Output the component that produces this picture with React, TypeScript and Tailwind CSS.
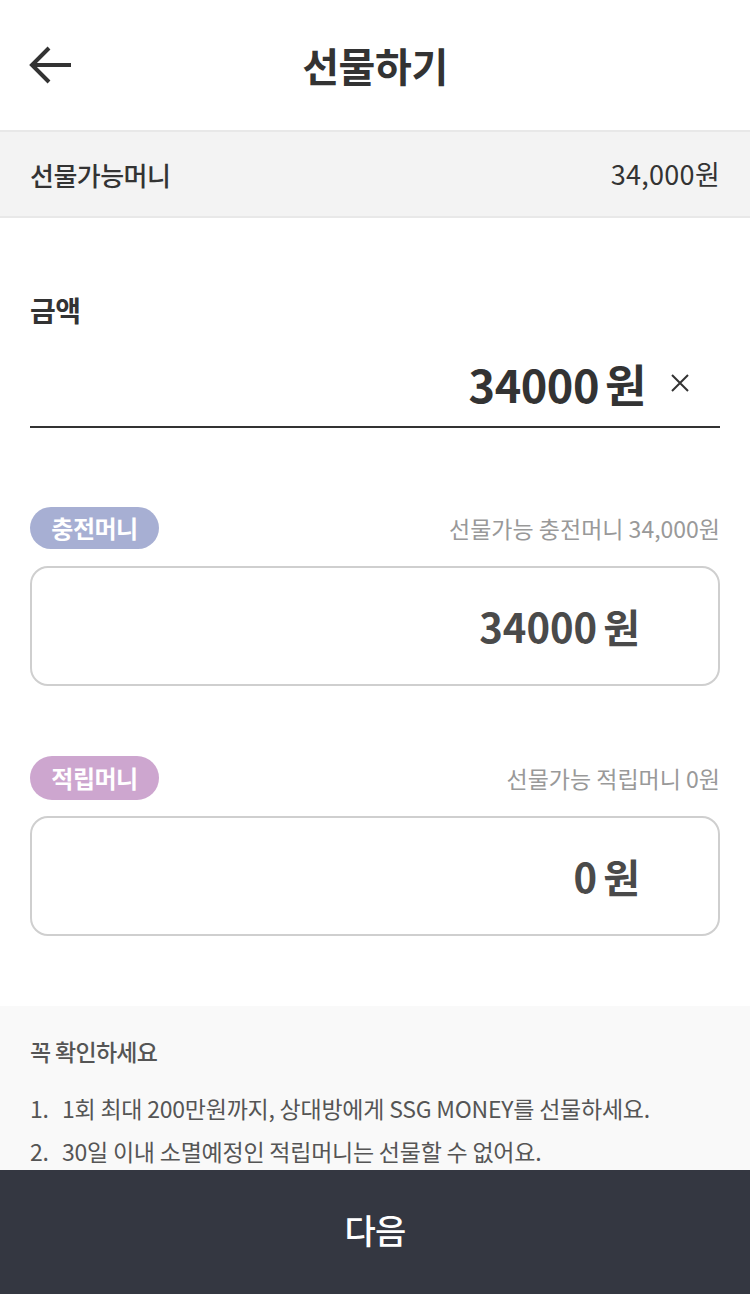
import React from "react";

const font = { fontFamily: '"Noto Sans CJK KR", "Noto Sans", sans-serif' };

export default function App() {
  return (
    <div
      className="w-[750px] h-[1294px] flex flex-col bg-white overflow-hidden text-[#333]"
      style={font}
    >
      {/* Header */}
      <div className="h-[130px] flex items-center relative shrink-0">
        <div className="absolute left-[28px] top-[45px]">
          <svg width="46" height="40" viewBox="0 0 46 40" fill="none">
            <path d="M43 20H5" stroke="#333" strokeWidth="4" />
            <path d="M21 3L4 20L21 37" stroke="#333" strokeWidth="4" fill="none" />
          </svg>
        </div>
        <div className="w-full text-center text-[40px] font-bold tracking-[-0.01em] leading-none">
          선물하기
        </div>
      </div>

      {/* Balance bar */}
      <div className="h-[88px] shrink-0 bg-[#f3f3f3] border-y-2 border-[#e8e8e8] flex items-center justify-between px-[30px]">
        <span className="text-[26px] font-medium tracking-[-0.02em]">선물가능머니</span>
        <span className="text-[27px] tracking-[0.01em]">34,000원</span>
      </div>

      <div className="flex-1 flex flex-col overflow-hidden">
        {/* Amount */}
        <div className="px-[30px] pt-[78px]">
          <div className="text-[28px] font-bold tracking-[-0.02em] leading-none">금액</div>
          <div className="mt-[26px] h-[78px] pb-[10px] flex items-center justify-end border-b-2 border-[#333]">
            <span className="text-[45px] font-bold tracking-[-0.01em] leading-none">
              34000<span className="ml-[6px]">원</span>
            </span>
            <svg className="ml-[24px] mr-[30px]" width="20" height="20" viewBox="0 0 20 20">
              <path d="M2 2L18 18M18 2L2 18" stroke="#333" strokeWidth="2" />
            </svg>
          </div>
        </div>

        {/* 충전머니 */}
        <div className="px-[30px] mt-[79px]">
          <div className="flex items-center justify-between h-[42px]">
            <span className="h-[42px] w-[129px] rounded-full bg-[#a7afd3] text-white text-[24px] font-bold tracking-[-0.02em] flex items-center justify-center">
              충전머니
            </span>
            <span className="text-[23px] text-[#999] tracking-[0em]">선물가능 충전머니 34,000원</span>
          </div>
          <div className="mt-[17px] h-[120px] rounded-[18px] border-2 border-[#cfcfcf] flex items-center justify-end pr-[78px]">
            <span className="text-[40px] font-bold text-[#4a4a4a] tracking-[0em] leading-none">
              34000<span className="ml-[6px]">원</span>
            </span>
          </div>
        </div>

        {/* 적립머니 */}
        <div className="px-[30px] mt-[70px]">
          <div className="flex items-center justify-between h-[44px]">
            <span className="h-[44px] w-[129px] rounded-full bg-[#cda6cf] text-white text-[24px] font-bold tracking-[-0.02em] flex items-center justify-center">
              적립머니
            </span>
            <span className="text-[23px] text-[#999] tracking-[0em]">선물가능 적립머니 0원</span>
          </div>
          <div className="mt-[16px] h-[120px] rounded-[18px] border-2 border-[#cfcfcf] flex items-center justify-end pr-[78px]">
            <span className="text-[40px] font-bold text-[#4a4a4a] tracking-[0em] leading-none">
              0<span className="ml-[6px]">원</span>
            </span>
          </div>
        </div>

        {/* Notice */}
        <div className="mt-[70px] flex-1 bg-[#f9f9f9] px-[30px] pt-[34px] text-[#555]">
          <div className="text-[23px] font-medium tracking-[-0.03em] leading-none">꼭 확인하세요</div>
          <ol className="mt-[32px] flex flex-col gap-[17px] text-[23px] tracking-[-0.01em] leading-[26px]">
            <li className="flex">
              <span className="w-[32px]">1.</span>
              <span>1회 최대 200만원까지, 상대방에게 SSG MONEY를 선물하세요.</span>
            </li>
            <li className="flex">
              <span className="w-[32px]">2.</span>
              <span>30일 이내 소멸예정인 적립머니는 선물할 수 없어요.</span>
            </li>
          </ol>
        </div>
      </div>

      {/* Footer button */}
      <div className="h-[124px] shrink-0 bg-[#343741] flex items-center justify-center pb-[6px]">
        <span className="text-white text-[34px] font-medium tracking-[-0.02em]">다음</span>
      </div>
    </div>
  );
}
